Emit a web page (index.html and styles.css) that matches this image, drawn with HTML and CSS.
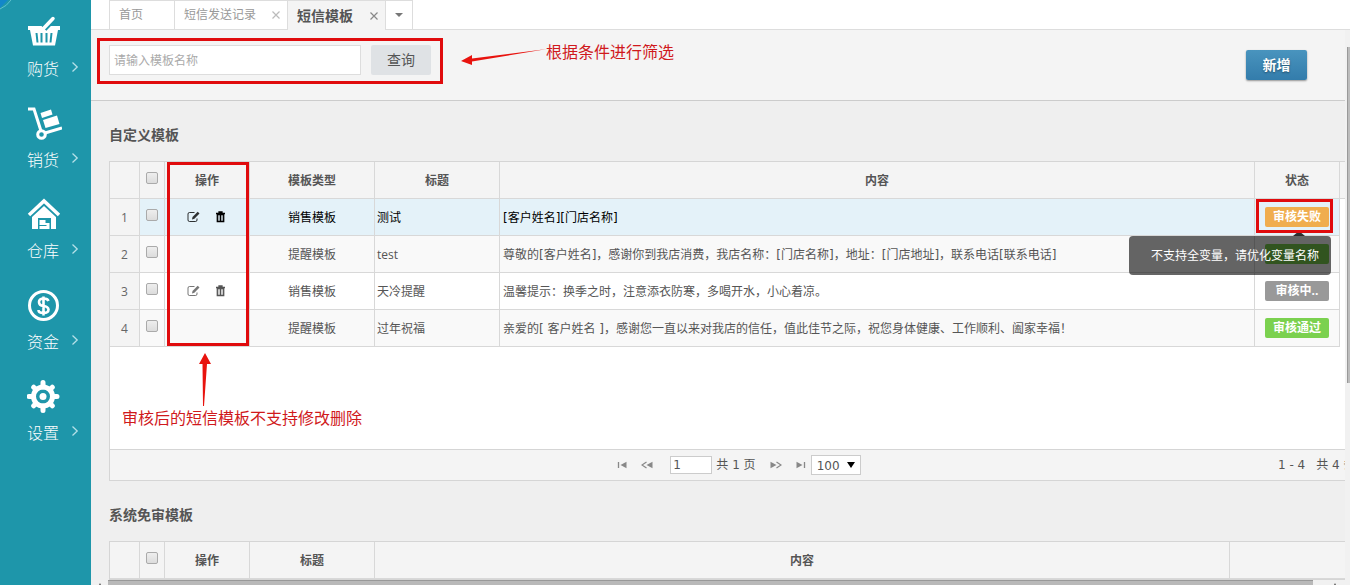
FILE: index.html
```html
<!DOCTYPE html>
<html lang="zh-CN">
<head>
<meta charset="utf-8">
<title>短信模板</title>
<link rel="stylesheet" href="styles.css">
</head>
<body>
<svg class="defs" aria-hidden="true">
  <symbol id="chevron" viewBox="0 0 8 12"><path d="M1.500 1.500 6.200 6 1.500 10.500" fill="none" stroke="currentColor" stroke-width="1.300"/></symbol>
  <symbol id="close" viewBox="0 0 8 8"><path d="M.5.5l7 7M7.500.5l-7 7" fill="none" stroke="currentColor" stroke-width="1.200"/></symbol>
  <symbol id="edit" viewBox="0 0 13 12"><path d="M7.500 1.500H2.500Q1 1.500 1 3v6q0 1.500 1.500 1.500h6Q10 10.500 10 9V7.500" fill="none" stroke="currentColor" stroke-opacity=".8"/><path d="M5 8.500l.5-2.500L10.700.8l1.800 1.700L7.400 7.800z" fill="currentColor" fill-opacity=".8"/></symbol>
  <symbol id="trash" viewBox="0 0 10 12"><path d="M.5 2.500h9M3.500 2V1h3v1" fill="none" stroke="currentColor" stroke-width="1.300"/><path d="M1.800 3.500h6.400v7H1.800z" fill="currentColor" fill-opacity=".3" stroke="currentColor" stroke-width="1.300"/><path d="M5 4v6" stroke="currentColor"/></symbol>
</svg>
<nav class="sidebar">
  <svg class="corner" viewBox="0 0 12 10" aria-hidden="true"><path d="M0 0h8L0 8z" fill="#1387c9"/><path d="M11 0Q7 6 0 9" fill="none" stroke="#5fc0cc"/></svg>
  <a class="nav-item" href="#">
    <svg class="nav-icon" viewBox="0 0 34 34"><path d="M1 11h32v4h-2l-3 15.500H6L3 15H1z" fill="#fff"/><path d="M9.500 18l1 9.500M14.500 18v9.500M19.500 18v9.500M24.500 18l-1 9.500" stroke="#1e96aa" stroke-width="2"/><path d="M17 13.500 26 4" stroke="#1e96aa" stroke-width="6.500"/><path d="M15.500 14.500 26 3.500" stroke="#fff" stroke-width="3.500" stroke-linecap="round"/></svg>
    <span class="nav-label">购货</span><svg class="nav-arrow"><use href="#chevron"/></svg>
  </a>
  <a class="nav-item" href="#">
    <svg class="nav-icon nav-icon-cart" viewBox="0 0 34 34"><path d="M0 3h6l7 22M17 27l17-5" fill="none" stroke="#fff" stroke-width="3"/><circle cx="13.500" cy="28.500" r="3.800" fill="none" stroke="#fff" stroke-width="3"/><path d="M12.500 7l10.500-3.500 1.500 5L14 12zM15 14l14-4.500 2.500 8.500L17.500 22z" fill="#fff"/></svg>
    <span class="nav-label">销货</span><svg class="nav-arrow"><use href="#chevron"/></svg>
  </a>
  <a class="nav-item" href="#">
    <svg class="nav-icon" viewBox="0 0 34 34"><path d="M2 18 17 4l15 14" fill="none" stroke="#fff" stroke-width="3.500"/><path d="M5 20 17 9l12 11v12h-5V21H11v11H5z" fill="#fff"/><path d="M12.500 23h6v3h4v6h-10v-3h7v-1h-7z" fill="#fff"/></svg>
    <span class="nav-label">仓库</span><svg class="nav-arrow"><use href="#chevron"/></svg>
  </a>
  <a class="nav-item" href="#">
    <svg class="nav-icon" viewBox="0 0 34 34"><circle cx="16.500" cy="17.500" r="14" fill="none" stroke="#fff" stroke-width="3"/><path d="M21.500 13q-1-2.500-4.500-2.500-5 0-5 3.500t4.500 4 5 3.500q0 3.500-5 3.500t-5-3M16.500 8.500v19" fill="none" stroke="#fff" stroke-width="2.600"/></svg>
    <span class="nav-label">资金</span><svg class="nav-arrow"><use href="#chevron"/></svg>
  </a>
  <a class="nav-item" href="#">
    <svg class="nav-icon" viewBox="0 0 34 34"><circle cx="16" cy="17.500" r="9.500" fill="none" stroke="#fff" stroke-width="5"/><circle cx="16" cy="17.500" r="3.500" fill="#fff"/><path d="M16 8V3.500M16 27v4.500M6 17.500H2M26 17.500h4M9 10.500 6.700 8.200M23 10.500l2.300-2.300M9 24.500l-2.300 2.300M23 24.500l2.300 2.300" stroke="#fff" stroke-width="5" stroke-linecap="round"/></svg>
    <span class="nav-label">设置</span><svg class="nav-arrow"><use href="#chevron"/></svg>
  </a>
</nav>
<main class="main">
  <div class="tabs">
    <button class="tab tab-home">首页</button>
    <button class="tab">短信发送记录<svg class="tab-close"><use href="#close"/></svg></button>
    <button class="tab tab-active">短信模板<svg class="tab-close"><use href="#close"/></svg></button>
    <button class="tab tab-more" aria-label="更多标签"><span class="caret"></span></button>
  </div>
  <div class="workspace">
    <div class="page">
      <form class="toolbar">
        <div class="search">
          <input class="search-input" type="text" placeholder="请输入模板名称" aria-label="模板名称">
          <button class="search-button" type="button">查询</button>
          <span class="mark mark-search"></span>
          <svg class="arrow-left" viewBox="0 0 86 20"><path d="M0 12l11-6 0 3.500L86 0 11 12.500v3.500z" fill="#e8130e"/></svg>
          <span class="note note-search">根据条件进行筛选</span>
        </div>
        <button class="add-button" type="button">新增</button>
      </form>
      <section class="section">
        <h2 class="section-title">自定义模板</h2>
        <div class="grid">
          <div class="grid-body">
            <table class="table">
              <colgroup><col class="c-num"><col class="c-check"><col class="c-ops"><col class="c-type"><col class="c-type"><col><col class="c-ops"><col class="c-end"></colgroup>
              <thead><tr><th></th><th><input type="checkbox" class="check" aria-label="全选"></th><th>操作</th><th>模板类型</th><th>标题</th><th>内容</th><th>状态</th><th></th></tr></thead>
              <tbody>
                <tr class="selected"><td class="num">1</td><td class="center"><input type="checkbox" class="check" aria-label="选择第1行"></td>
                  <td><div class="ops"><button class="icon-button" aria-label="修改"><svg class="icon"><use href="#edit"/></svg></button><button class="icon-button" aria-label="删除"><svg class="icon"><use href="#trash"/></svg></button></div></td>
                  <td class="center">销售模板</td><td>测试</td><td class="content">[客户姓名][门店名称]</td>
                  <td class="center status"><span class="badge badge-fail">审核失败</span><span class="mark mark-status"></span><span class="tooltip" role="tooltip">不支持全变量，请优化变量名称</span></td><td></td></tr>
                <tr class="even"><td class="num">2</td><td class="center"><input type="checkbox" class="check" aria-label="选择第2行"></td><td></td>
                  <td class="center">提醒模板</td><td>test</td><td class="content">尊敬的[客户姓名]，感谢你到我店消费，我店名称：[门店名称]，地址：[门店地址]，联系电话[联系电话]</td>
                  <td class="center"><span class="badge badge-covered"></span></td><td></td></tr>
                <tr><td class="num">3</td><td class="center"><input type="checkbox" class="check" aria-label="选择第3行"></td>
                  <td><div class="ops"><button class="icon-button" aria-label="修改"><svg class="icon"><use href="#edit"/></svg></button><button class="icon-button" aria-label="删除"><svg class="icon"><use href="#trash"/></svg></button></div></td>
                  <td class="center">销售模板</td><td>天冷提醒</td><td class="content">温馨提示：换季之时，注意添衣防寒，多喝开水，小心着凉。</td>
                  <td class="center"><span class="badge badge-wait">审核中..</span></td><td></td></tr>
                <tr class="even"><td class="num">4</td><td class="center"><input type="checkbox" class="check" aria-label="选择第4行"></td><td></td>
                  <td class="center">提醒模板</td><td>过年祝福</td><td class="content">亲爱的[ 客户姓名 ]，感谢您一直以来对我店的信任，值此佳节之际，祝您身体健康、工作顺利、阖家幸福！</td>
                  <td class="center"><span class="badge badge-pass">审核通过</span></td><td></td></tr>
              </tbody>
            </table>
            <span class="mark mark-ops"></span>
            <svg class="arrow-up" viewBox="0 0 12 54"><path d="M6 0l6 11-4 0L5 53 4 53 3.500 11H0z" fill="#e8130e"/></svg>
            <span class="note note-ops">审核后的短信模板不支持修改删除</span>
          </div>
          <div class="pager">
            <div class="pager-nav">
              <button class="page-button" aria-label="首页"><svg class="page-icon" viewBox="0 0 12 8"><path d="M1.500 1v6" stroke="currentColor" stroke-width="1.300"/><path d="M9.500.8v6.400L3.500 4z" fill="currentColor"/></svg></button>
              <button class="page-button" aria-label="上一页"><svg class="page-icon" viewBox="0 0 12 8"><path d="M5.500 1 1 4l4.500 3" fill="none" stroke="currentColor" stroke-width="1.200"/><path d="M11.500.8v6.400L5.500 4z" fill="currentColor"/></svg></button>
              <input class="page-input" type="text" value="1" aria-label="页码">
              <span class="page-total">共 1 页</span>
              <button class="page-button" aria-label="下一页"><svg class="page-icon" viewBox="0 0 12 8"><path d="M6.500 1 11 4 6.500 7" fill="none" stroke="currentColor" stroke-width="1.200"/><path d="M.5.8v6.400L6.500 4z" fill="currentColor"/></svg></button>
              <button class="page-button page-last" aria-label="末页"><svg class="page-icon" viewBox="0 0 12 8"><path d="M10.500 1v6" stroke="currentColor" stroke-width="1.300"/><path d="M2.500.8v6.400L8.500 4z" fill="currentColor"/></svg></button>
              <span class="select-box"><select class="page-size" aria-label="每页条数"><option>100</option></select></span>
            </div>
            <div class="pager-info"><span>1 - 4</span><span>共 4 条</span></div>
          </div>
        </div>
      </section>
      <section class="section">
        <h2 class="section-title">系统免审模板</h2>
        <div class="grid">
          <table class="table">
            <colgroup><col class="c-num"><col class="c-check"><col class="c-ops"><col class="c-type"><col><col class="c-last"></colgroup>
            <thead><tr><th></th><th><input type="checkbox" class="check" aria-label="全选"></th><th>操作</th><th>标题</th><th>内容</th><th></th></tr></thead>
          </table>
        </div>
      </section>
    </div>
    <div class="track-v"><div class="thumb-v"></div></div>
    <div class="track-h"><span class="tip"></span><div class="thumb-h"></div><span class="tip"></span></div>
  </div>
</main>
</body>
</html>
```
FILE: styles.css
```css
* { box-sizing: border-box; }
body {
  margin: 0;
  height: 100vh;
  display: flex;
  overflow: hidden;
  background: #efefef;
  color: #555;
  font: 12px/20px "Open Sans", "Noto Sans CJK SC", sans-serif;
}
button, input, select { font: inherit; color: inherit; margin: 0; }
button { padding: 0; border: 0; background: none; cursor: pointer; }
.defs { position: absolute; width: 0; height: 0; }

/* Sidebar */
.sidebar {
  position: relative;
  flex: 0 0 91px;
  padding-top: 15px;
  background: #1e96aa;
}
.corner { position: absolute; left: 0; top: 0; width: 12px; height: 10px; }
.nav-item {
  display: grid;
  grid-template-columns: 34px 8px;
  column-gap: 10px;
  row-gap: 8px;
  height: 91px;
  padding-left: 27px;
  align-content: start;
  color: #fff;
  text-decoration: none;
}
.nav-icon { grid-column: 1 / 3; width: 34px; height: 34px; }
.nav-icon-cart { margin-left: 1px; }
.nav-label { font-size: 16px; line-height: 24px; font-weight: 300; }
.nav-arrow { width: 8px; height: 12px; margin-top: 4px; color: #b5e0e8; }

/* Tabs */
.main { flex: 1; min-width: 0; display: flex; flex-direction: column; }
.tabs {
  display: flex;
  height: 30px;
  padding-left: 18px;
  background: #fff;
  border-bottom: 1px solid #ddd;
}
.tab {
  display: flex;
  align-items: center;
  gap: 16px;
  height: 29px;
  padding: 0 7px 0 9px;
  border: 1px solid #ddd;
  border-width: 1px 0 0 1px;
  color: #999;
}
.tab-home { width: 65px; }
.tab-close { width: 8px; height: 8px; color: #bbb; }
.tab-active {
  height: 30px;
  gap: 17px;
  background: #f4f4f4;
  color: #555;
  font-size: 14px;
  font-weight: bold;
}
.tab-active .tab-close { color: #888; }
.tab-more { width: 28px; border-right-width: 1px; }
.caret { border: 4px solid transparent; border-top-color: #777; border-bottom: 0; }

/* Workspace with its scroll tracks */
.workspace {
  flex: 1;
  min-height: 0;
  display: grid;
  grid-template: minmax(0, 1fr) 5px / minmax(0, 1fr) 5px;
}
.page { overflow: hidden; }
.track-v { background: #f1f1f1; padding: 17px 0 0 2px; }
.thumb-v { height: 63%; background: #bcbcbc; border-left: 1px solid #999; }
.track-h {
  grid-column: 1 / 3;
  display: flex;
  justify-content: space-between;
  padding: 0 13px 0 7px;
  background: #f1f1f1;
}
.thumb-h { flex: 1; margin: 0 20px 0 6px; background: #b9b9b9; border-top: 1px solid #999; }
.tip { width: 4px; height: 4px; margin-top: 3px; background: #555; clip-path: polygon(0 100%, 50% 0, 100% 100%); }

/* Toolbar */
.toolbar {
  display: flex;
  align-items: flex-start;
  justify-content: space-between;
  height: 71px;
  padding: 15px 38px 0 18px;
  background: #f4f4f4;
  border-bottom: 1px solid #ccc;
}
.search { position: relative; display: flex; gap: 10px; }
.search-input {
  width: 252px;
  height: 30px;
  padding: 0 4px;
  border: 1px solid #ddd;
  background: #fff;
}
.search-input::placeholder { color: #aaa; opacity: 1; }
.search-button { width: 60px; height: 30px; border-radius: 2px; background: #dfe2e5; font-size: 14px; }
.add-button {
  width: 61px;
  height: 30px;
  margin-top: 5px;
  border-radius: 2px;
  background: linear-gradient(#4994be, #337cab);
  box-shadow: 0 1px 2px rgba(0, 0, 0, .4);
  color: #fff;
  font-size: 14px;
  font-weight: bold;
  text-shadow: 0 1px 2px rgba(0, 0, 0, .4);
}

/* Sections */
.section { padding-left: 18px; }
.section-title {
  margin: 0;
  padding: 24px 0 16px;
  color: #555;
  font-size: 14px;
  line-height: 20px;
  font-weight: 600;
}
.grid { border: 1px solid #d5d5d5; border-right: 0; }
.grid-body { position: relative; height: 287px; background: #fff; }
.table { width: 100%; border-collapse: separate; border-spacing: 0; table-layout: fixed; }
.c-num { width: 30px; }
.c-check { width: 25px; }
.c-ops { width: 85px; }
.c-type { width: 125px; }
.c-end { width: 5px; }
.c-last { width: 115px; }
.table th, .table td {
  height: 37px;
  padding: 2px 2px 0;
  border: 1px solid #d8d8d8;
  border-width: 0 1px 1px 0;
  white-space: nowrap;
}
.table th { background: #f4f4f4; font-weight: bold; }
.table td { text-align: left; }
.table td.content { padding-left: 3px; font-family: "DejaVu Sans", "Noto Sans CJK SC", sans-serif; }
.table td.center, .table td.num { text-align: center; }
.table td.num { background: #f4f4f4; color: #666; }
.table th:last-child { border-right: 0; }
.table td:last-child { border: 0; background: #fff; }
.even { background: #f9f9f9; }
.selected { background: #e4f2f9; color: #000; }
.check {
  appearance: none;
  display: block;
  width: 12px;
  height: 12px;
  margin: 0 auto 7px;
  border: 1px solid #aaa;
  border-radius: 2px;
  background: linear-gradient(#eee, #dcdcdc);
}
.ops { display: flex; justify-content: center; gap: 14px; padding-bottom: 2px; }
.icon-button { display: flex; }
.icon { width: 13px; height: 12px; }
.badge {
  display: block;
  width: 64px;
  height: 20px;
  margin: 0 auto;
  border-radius: 2px;
  color: #fff;
  font-weight: bold;
}
.table td.center:has(.badge) { padding-top: 0; }
.badge-fail { background: #f0ad4e; }
.badge-wait { background: #999; }
.badge-pass, .badge-covered { background: #7bd14f; }
.status { position: relative; }
.tooltip {
  position: absolute;
  z-index: 1;
  right: 8px;
  top: 37px;
  width: 202px;
  height: 39px;
  padding-left: 22px;
  border-radius: 4px;
  background: rgba(0, 0, 0, .6);
  color: #fff;
  line-height: 39px;
  text-align: left;
}
.tooltip::before {
  content: "";
  position: absolute;
  right: 26px;
  top: -5px;
  border: 6px solid transparent;
  border-top: 0;
  border-bottom: 5px solid rgba(0, 0, 0, .8);
}

/* Pager */
.pager {
  display: grid;
  grid-template-columns: 1fr auto 1fr;
  align-items: center;
  height: 31px;
  padding-left: 23px;
  border-top: 1px solid #d5d5d5;
  background: #f4f4f4;
  font-family: "DejaVu Sans", "Noto Sans CJK SC", sans-serif;
}
.pager-nav { grid-column: 2; display: flex; align-items: center; }
.page-button { display: flex; width: 24px; color: #888; }
.page-last { width: 17px; }
.page-icon { width: 12px; height: 8px; }
.page-input {
  width: 42px;
  height: 18px;
  margin: 0 4px 0 5px;
  padding: 0 2px;
  border: 1px solid #ccc;
  background: #fff;
}
.page-total { margin-right: 14px; }
.select-box { position: relative; }
.select-box::after {
  content: "";
  position: absolute;
  right: 6px;
  top: 7px;
  border: 4px solid transparent;
  border-top: 6px solid #000;
  border-bottom: 0;
  pointer-events: none;
}
.page-size {
  appearance: none;
  display: block;
  width: 50px;
  height: 20px;
  padding: 0 5px;
  border: 1px solid #ccc;
  border-radius: 0;
  background: #fff;
}
.pager-info {
  justify-self: end;
  display: flex;
  gap: 11px;
  width: 67px;
  overflow: hidden;
  white-space: nowrap;
}
.pager-info span { flex: none; }

/* Annotations */
.mark { position: absolute; border: 3px solid #e00b0d; pointer-events: none; }
.mark-search { inset: -7px -12px -9px -12px; }
.mark-status { inset: 0 6px 2px 1px; z-index: 2; }
.mark-ops { left: 57px; top: 0; width: 82px; height: 184px; }
.note { position: absolute; color: #d0191c; font-size: 16px; line-height: 24px; white-space: nowrap; }
.note-search { left: 437px; top: -5px; }
.note-ops { left: 12px; top: 244px; }
.arrow-left { position: absolute; left: 352px; top: 4px; width: 86px; height: 20px; }
.arrow-up { position: absolute; left: 89px; top: 191px; width: 12px; height: 54px; }
```
